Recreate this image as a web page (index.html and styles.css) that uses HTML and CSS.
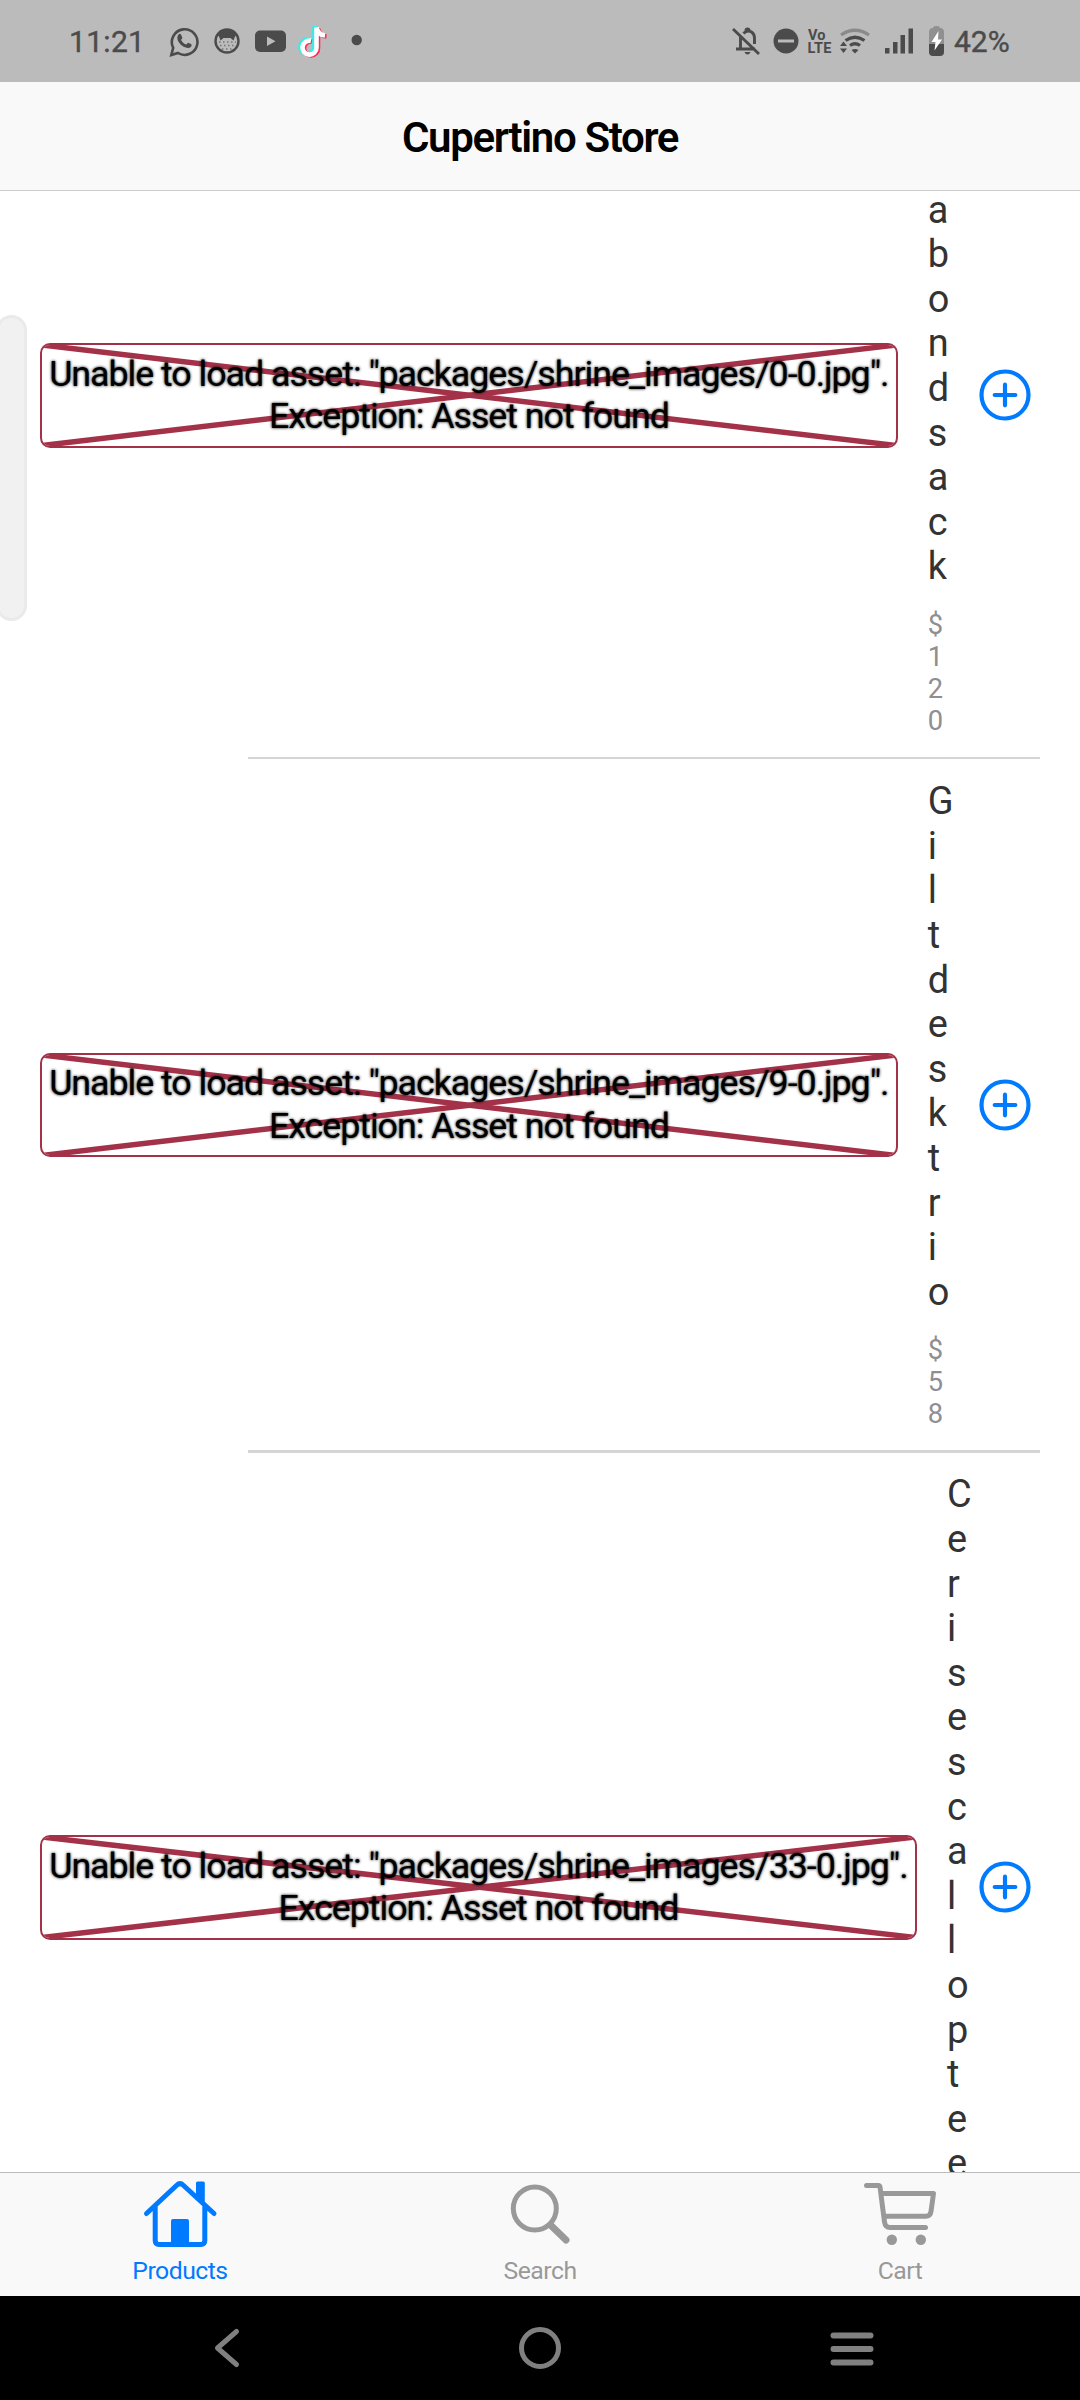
FILE: index.html
```html
<!DOCTYPE html>
<html lang="en">
<head>
<meta charset="utf-8">
<title>Cupertino Store</title>
<link rel="stylesheet" href="styles.css">
</head>
<body>
<div class="phone">
  <header class="status">
    <span class="clock">11:21</span>
    <svg class="status-apps" width="204" height="36" viewBox="166 23 204 36">
      <g fill="none" stroke="#4b4b4b" stroke-width="2.600"><path d="M171.300 55l1.900-7.200a12.800 12.800 0 1 1 4.800 5.200z"/></g>
      <path fill="#4b4b4b" d="M178.500 34.500c1-1 2.200-.8 2.600.2l1.200 2.900c.3.800-1 2-1.200 2.500 1.200 2.200 2.700 3.500 4.900 4.500.9-.2 1.800-2 2.500-1.700l2.600 1.200c1 .6.400 2.600-.5 3.200-2.400 1.600-5.600.4-8.400-1.500-3.600-2.900-6.600-7.400-3.700-11.300z"/>
      <circle cx="227" cy="41" r="11.500" fill="#bbb" stroke="#4b4b4b" stroke-width="2.400"/>
      <path fill="#4b4b4b" d="M217.500 35Q227 25 236.500 35l-1.500 1.500-1.500 4-3-2.500h-7l-3 2.500-1.500-4z"/>
      <path stroke="#777" stroke-width="1.400" stroke-dasharray="1.500 2.500" fill="none" d="M219 42h17M220 45.500h15M222 49h11"/>
      <rect x="255" y="30.500" width="31" height="21.500" rx="5" fill="#4b4b4b"/>
      <path fill="#bbb" d="M267 36.500l8.500 4.700-8.500 4.700z"/>
      <g fill="none" stroke-width="4.600"><path stroke="#25f4ee" d="M309.500 40a7 7 0 1 0 5 7V26.500c.8 4.500 4 7.500 8.500 8"/><path stroke="#fe2c55" d="M312 41.500a7 7 0 1 0 6 6.500V28.500c.8 4.500 4 7.500 8.500 8"/><path stroke="#fff" d="M311 40.800a7 7 0 1 0 5.500 6.700V27.500c.8 4.500 4 7.500 8.500 8"/></g>
      <circle cx="356.700" cy="40" r="5.200" fill="#4b4b4b"/>
    </svg>
    <svg class="status-system" width="216" height="36" viewBox="730 23 216 36">
      <g fill="none" stroke="#4b4b4b" stroke-width="2.900"><path d="M733 29l26 25M736 49h19M740.500 49V36M743.500 33.500q3.500-4 8-1.500 3 2 3 6v6"/></g>
      <path fill="#4b4b4b" d="M744.500 30.500a3 3 0 0 1 6 0zM744.500 52h6q-1 2.500-3 2.500t-3-2.500z"/>
      <circle cx="786" cy="41" r="12.500" fill="#4b4b4b"/><path stroke="#bbb" stroke-width="3" d="M778 41h16"/>
      <text class="volte" x="808" y="40">Vo</text><text class="volte" x="807.500" y="53" textLength="24">LTE</text>
      <g fill="none" stroke="#4b4b4b" stroke-width="3.200"><path stroke="#8a8a8a" d="M841 35q14-9.500 28 0"/><path d="M845.500 40.500q9.500-6.500 19 0M850 45.500q5-3.500 10 0"/></g>
      <path fill="#4b4b4b" d="M851.500 50q3.500-2 7 0l-3.500 3.500zM840 46l3.500-4.500L847 46zM840 48.500h7l-3.500 4.500z"/>
      <path fill="#4b4b4b" d="M885 48h4.500v5.500H885zM893 42h4.500v11.500H893zM900.500 35h4.500v18.500h-4.500zM908.500 28.500h4.500v25h-4.500z"/>
      <path fill="#909090" d="M933 28q0-2 3.500-2t3.500 2q4 0 4 4v12h-15V32q0-4 4-4z"/><path fill="#4b4b4b" d="M929 44h15v8q0 4-4 4h-7q-4 0-4-4z"/><path fill="#fff" d="M938.500 31l-7 11h4l-1 8.500 7.500-11h-4z"/>
    </svg>
    <span class="battery">42%</span>
  </header>
  <div class="navbar"><h1>Cupertino Store</h1></div>
  <main class="list">
    <div class="scroll">
      <article class="row">
        <div class="error"><svg class="cross"><line x1="0" y1="0" x2="100%" y2="100%"/><line x1="100%" y1="0" x2="0" y2="100%"/></svg><p>Unable to load asset: "packages/shrine_images/0-0.jpg".<br>Exception: Asset not found</p></div>
        <div class="info"><div class="name">Vagabond sack</div><div class="price">$120</div></div>
        <button class="add" aria-label="Add"><svg width="52" height="52" viewBox="0 0 52 52"><circle cx="26" cy="26" r="23.500"/><path d="M26 15.700v20.600M15.700 26h20.600"/></svg></button>
      </article>
      <hr>
      <article class="row">
        <div class="error"><svg class="cross"><line x1="0" y1="0" x2="100%" y2="100%"/><line x1="100%" y1="0" x2="0" y2="100%"/></svg><p>Unable to load asset: "packages/shrine_images/9-0.jpg".<br>Exception: Asset not found</p></div>
        <div class="info"><div class="name">Gilt desk trio</div><div class="price">$58</div></div>
        <button class="add" aria-label="Add"><svg width="52" height="52" viewBox="0 0 52 52"><circle cx="26" cy="26" r="23.500"/><path d="M26 15.700v20.600M15.700 26h20.600"/></svg></button>
      </article>
      <hr>
      <article class="row">
        <div class="error wide"><svg class="cross"><line x1="0" y1="0" x2="100%" y2="100%"/><line x1="100%" y1="0" x2="0" y2="100%"/></svg><p>Unable to load asset: "packages/shrine_images/33-0.jpg".<br>Exception: Asset not found</p></div>
        <div class="info"><div class="name">Cerise scallop tee</div><div class="price">$24</div></div>
        <button class="add" aria-label="Add"><svg width="52" height="52" viewBox="0 0 52 52"><circle cx="26" cy="26" r="23.500"/><path d="M26 15.700v20.600M15.700 26h20.600"/></svg></button>
      </article>
    </div>
  </main>
  <nav class="tabs">
    <a class="tab active"><svg width="76" height="76" viewBox="142 2175 76 76"><path d="M146.500 2213.500L177 2185q3-3 6 0l31 28.500M155.200 2207v33.500q0 4 4 4h41.600q4 0 4-4V2207"/><path class="solid" d="M171 2221q0-2 2-2h14q2 0 2 2v25h-18zM196 2183q0-1.500 1.500-1.500h5.800q1.500 0 1.500 1.500v22l-8.800-8z"/></svg><span>Products</span></a>
    <a class="tab"><svg width="76" height="76" viewBox="502 2175 76 76"><circle cx="534.800" cy="2208.500" r="21.500"/><path class="handle" d="M550.500 2225l15.500 15"/></svg><span>Search</span></a>
    <a class="tab"><svg width="76" height="76" viewBox="862 2175 76 76"><path d="M866.500 2185.500h12q1.200 0 1.500 1.500l4.500 35q.8 5.500 5.500 5.500h35.500M881 2193.500h52.500l-2.500 18q-.7 4.700-5 4.700h-42"/><circle class="solid" cx="891.800" cy="2239.800" r="5.200"/><circle class="solid" cx="920.800" cy="2239.800" r="5.200"/></svg><span>Cart</span></a>
  </nav>
  <footer class="system-nav">
    <svg width="44" height="44" viewBox="0 0 44 44"><path d="M31.500 5.500L12.500 22l19 16.500"/></svg>
    <svg width="44" height="44" viewBox="0 0 44 44"><circle cx="22" cy="22" r="18.500"/></svg>
    <svg width="44" height="44" viewBox="0 0 44 44"><path class="bars" d="M3.500 9.500h37M3.500 23h37M3.500 36.500h37"/></svg>
  </footer>
  <div class="edge-handle"></div>
</div>
</body>
</html>
```
FILE: styles.css
```css
* { box-sizing: border-box; }
body { margin: 0; font-family: Roboto, sans-serif; background: #fff; }
.phone { position: relative; display: flex; flex-direction: column; width: 1080px; height: 2400px; overflow: hidden; }

.status { display: flex; align-items: center; height: 82px; flex: none; padding-left: 69px; background: #bbb; color: #4b4b4b; }
.status svg { flex: none; display: block; }
.clock, .battery { font-size: 30px; line-height: 36px; padding-top: 2px; -webkit-text-stroke: .4px #4b4b4b; }
.clock { width: 97px; letter-spacing: .3px; }
.status-system { margin-left: 360px; }
.battery { margin-left: 8px; }
.volte { font-size: 14.500px; font-weight: 700; fill: #4b4b4b; }

.navbar { display: flex; align-items: center; justify-content: center; height: 109px; flex: none; background: #f9f9f9; border-bottom: 1px solid #ccc; }
.navbar h1 { margin: 4px 0 0; font-size: 42px; line-height: 50px; font-weight: 600; letter-spacing: -1.350px; color: #000; }

.list { height: 1981px; flex: none; overflow: hidden; }
.scroll { margin-top: -157px; }
.row { display: flex; align-items: center; padding: 19.800px 0 19.800px 39.600px; }
.list hr { margin: 0 39.600px 0 247.500px; border: 0; height: 2.500px; background: #d5d5d5; }

.error { position: relative; display: flex; align-items: center; justify-content: center; flex: none; width: 858.500px; height: 104.500px; margin-right: 29.700px; border: 2.475px solid #a33249; border-radius: 10px; overflow: hidden; }
.error.wide { width: 877.700px; }
.cross { position: absolute; inset: 0; width: 100%; height: 100%; }
.cross line { stroke: #a33249; stroke-width: 5.500; }
.error p { position: relative; margin: 0; font-size: 35.800px; line-height: 42.700px; letter-spacing: -1.040px; text-align: center; white-space: nowrap; color: #000; text-shadow: 0 0 3px #000; }

.info { width: 12px; flex: none; }
.name { font-size: 37.900px; line-height: 44.600px; color: #333; word-break: break-all; }
.price { margin-top: 19.800px; font-size: 27.300px; line-height: 32.100px; color: #8e8e93; line-break: anywhere; }

.add { margin: 0 49.200px 0 auto; padding: 0; border: 0; background: none; }
.add svg { display: block; fill: none; stroke: #007aff; stroke-width: 4.200; stroke-linecap: round; }

.tabs { display: flex; height: 124px; flex: none; background: #f9f9f9; border-top: 1px solid #bbb; }
.tab { display: flex; flex: 1; flex-direction: column; align-items: center; padding-top: 2px; color: #999; }
.tab.active { color: #007aff; }
.tab svg { display: block; fill: none; stroke: currentColor; stroke-width: 5; stroke-linecap: round; stroke-linejoin: round; }
.tab .solid { fill: currentColor; stroke: none; }
.tab .handle { stroke-width: 7; }
.tab span { margin-top: 5px; font-size: 24.750px; line-height: 29px; letter-spacing: -.500px; }

.system-nav { display: flex; align-items: center; justify-content: space-between; flex: none; height: 104px; padding: 0 206px 0 205px; background: #000; }
.system-nav svg { fill: none; stroke: #808080; stroke-width: 5; stroke-linecap: round; stroke-linejoin: round; }
.system-nav .bars { stroke-width: 6; }

.edge-handle { position: absolute; left: -4px; top: 315px; width: 31px; height: 306px; background: #f1f1f1; border: 3px solid #eaeaea; border-radius: 18px; }
```
